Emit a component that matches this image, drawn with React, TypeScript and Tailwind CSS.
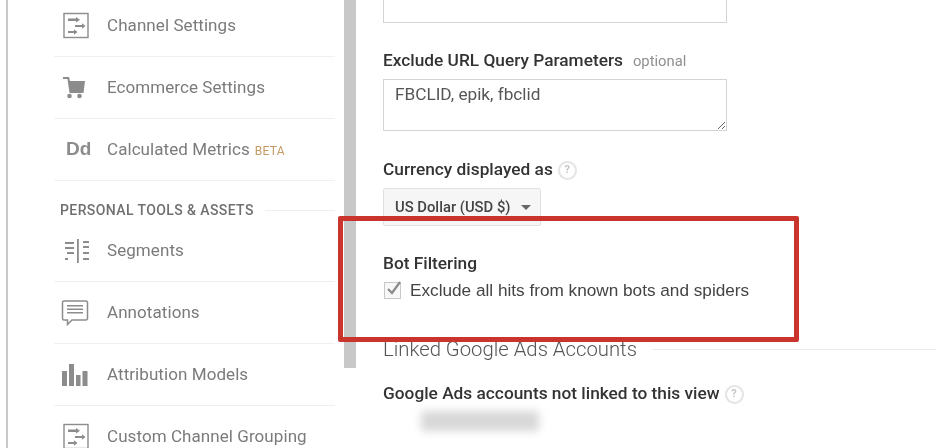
const ICON = 'h-[28px] w-[28px] shrink-0 text-[#8c8c8c]';

function ChannelIcon() {
  return (
    <svg viewBox="0 0 28 28" className={ICON} fill="currentColor">
      <rect x="3" y="1.500" width="24" height="24" fill="none" stroke="currentColor" strokeWidth="1.400" />
      <path d="M7 6.500h8V5l4 2.800-4 2.800V9H7zM14 13h7v-1.800l3.500 2.800-3.500 2.800V15h-7zM7 19h6v-1.800l3.500 2.800-3.500 2.800V21H7z" />
    </svg>
  );
}

function CartIcon() {
  return (
    <svg viewBox="0 0 28 28" className={ICON} fill="currentColor">
      <path d="M2 3h6l1 4h15l-1.500 12H8.500L6.500 5H2z" />
      <circle cx="8.500" cy="22" r="2.300" />
      <circle cx="18.500" cy="22" r="2.300" />
    </svg>
  );
}

function SegmentsIcon() {
  return (
    <svg viewBox="0 0 28 28" className={ICON} fill="currentColor">
      <rect x="16" y="2" width="1.800" height="24" />
      <path d="M4 5h9v2H4zM4 10h9v2H4zM6 15h7v2H6zM4 21h3v2H4zM22 4h7v2h-7zM22 9h9v2h-9zM22 15h8v2h-8zM22 21h7v2h-7z" />
    </svg>
  );
}

function NoteIcon() {
  return (
    <svg viewBox="0 0 28 28" className={ICON}>
      <path d="M3 2h22a1.500 1.500 0 0 1 1.500 1.500v16A1.500 1.500 0 0 1 25 21H11l-4.500 4.500V21H3a1.500 1.500 0 0 1-1.500-1.500v-16A1.500 1.500 0 0 1 3 2z" fill="none" stroke="currentColor" strokeWidth="1.500" />
      <path d="M6 6h16v1.500H6zM6 9.500h16V11H6zM6 13h16v1.500H6z" fill="currentColor" />
    </svg>
  );
}

function BarsIcon() {
  return (
    <svg viewBox="0 0 28 28" className={ICON} fill="currentColor">
      <rect x="1" y="10" width="5" height="15" />
      <rect x="8" y="3" width="5" height="22" />
      <rect x="15" y="14" width="4.500" height="11" />
      <rect x="21.500" y="10" width="5" height="15" />
    </svg>
  );
}

function HelpDot() {
  return (
    <span className="-ml-px flex h-[19px] w-[19px] items-center justify-center rounded-full border-2 border-[#e4e4e4] font-['Roboto',sans-serif] text-[11px] font-bold text-[#c4c4c4]">
      ?
    </span>
  );
}

function NavRow({ icon, label, beta }: { icon: React.ReactNode; label: string; beta?: boolean }) {
  return (
    <div className="flex h-[62px] items-center border-b border-[#f0f0f0]">
      <div className="flex w-[53px] justify-start pl-[7px]">{icon}</div>
      <span className="text-[17px] tracking-[0.07px] text-[#7b7b7b]">{label}</span>
      {beta && <span className="ml-[5px] mt-[3px] text-[12px] tracking-[0.3px] text-[#c69a63]">BETA</span>}
    </div>
  );
}

export default function App() {
  return (
    <div className="relative flex h-[448px] w-[936px] overflow-hidden bg-white font-['Roboto',sans-serif] blur-[0.4px]">
      <aside className="ml-[6px] flex h-[448px] w-[338px] shrink-0 flex-col overflow-hidden border-l-2 border-[#c9c9c9] pl-[46px] pr-[9px]">
        <div className="-mt-[5px]">
          <NavRow icon={<ChannelIcon />} label="Channel Settings" />
          <NavRow icon={<CartIcon />} label="Ecommerce Settings" />
          <NavRow
            icon={
              <span className="pl-[5px] font-['Liberation_Sans',sans-serif] text-[19px] font-bold text-[#8c8c8c]">Dd</span>
            }
            label="Calculated Metrics"
            beta
          />
          <div className="flex h-[39px] items-center pl-[6px] pt-[20px]">
            <span className="whitespace-nowrap text-[14px] font-medium tracking-[0.4px] text-[#6f6f6f]">
              PERSONAL TOOLS &amp; ASSETS
            </span>
            <span className="ml-[11px] h-px flex-1 bg-[#f0f0f0]" />
          </div>
          <NavRow icon={<SegmentsIcon />} label="Segments" />
          <NavRow icon={<NoteIcon />} label="Annotations" />
          <NavRow icon={<BarsIcon />} label="Attribution Models" />
          <NavRow icon={<ChannelIcon />} label="Custom Channel Grouping" />
        </div>
      </aside>

      <div className="h-[368px] w-[12px] shrink-0 bg-[#c8c8c8]" />

      <main className="flex-1 pl-[27px]">
        <div className="h-[23px] w-[344px] border-x border-b border-[#d4d4d4]" />

        <div className="mt-[26px] flex h-[24px] items-center">
          <span className="text-[17.300px] font-medium text-[#333333]">Exclude URL Query Parameters</span>
          <span className="ml-[10px] text-[14.800px] text-[#8f8f8f]">optional</span>
        </div>
        <textarea
          readOnly
          defaultValue="FBCLID, epik, fbclid"
          className="mt-[6px] block h-[52px] w-[344px] border border-[#d4d4d4] px-[11px] py-[2px] text-[17.200px] text-[#555555] outline-none"
        />

        <div className="mt-[27px] flex h-[24px] items-center gap-[6px]">
          <span className="text-[17.300px] font-medium text-[#333333]">Currency displayed as</span>
          <HelpDot />
        </div>
        <div className="mt-[6px] flex h-[38px] w-[158px] items-center rounded-[2px] border border-[#e0e0e0] bg-[#f6f6f6] pl-[11px]">
          <span className="text-[14.800px] font-medium text-[#444444]">US Dollar (USD $)</span>
          <span className="ml-[10px] mt-[1px] h-0 w-0 border-x-[5px] border-t-[5px] border-x-transparent border-t-[#666666]" />
        </div>

        <div className="mt-[26px] flex h-[24px] items-center text-[17.300px] font-medium text-[#333333]">Bot Filtering</div>
        <div className="mt-[4px] flex h-[20px] items-center">
          <span className="relative ml-px h-[17px] w-[17px] border border-[#c9c9c9] bg-[#f8f8f8]">
            <svg viewBox="0 0 18 18" className="absolute -top-[3px] left-0 h-[18px] w-[18px]">
              <path d="M3 9l4 4 8-11" fill="none" stroke="#8a8a8a" strokeWidth="2.200" />
            </svg>
          </span>
          <span className="ml-[9px] pt-[2px] font-['Liberation_Sans',sans-serif] text-[17.200px] text-[#444444]">
            Exclude all hits from known bots and spiders
          </span>
        </div>

        <div className="mt-[35px] flex h-[28px] items-center">
          <span className="whitespace-nowrap text-[20.300px] font-light text-[#555555]">Linked Google Ads Accounts</span>
          <span className="ml-[15px] h-px flex-1 bg-[#e8e8ee]" />
        </div>

        <div className="mt-[19px] flex h-[24px] items-center gap-[6px]">
          <span className="text-[17.300px] font-medium text-[#333333]">Google Ads accounts not linked to this view</span>
          <HelpDot />
        </div>
        <div className="ml-[38px] mt-[5px] h-[20px] w-[118px] bg-[#d8d8d8] blur-[4px]" />
      </main>

      <div className="absolute left-[338px] top-[216px] h-[126px] w-[461px] rounded-[2px] border-[5px] border-[#c9352d]" />
    </div>
  );
}
